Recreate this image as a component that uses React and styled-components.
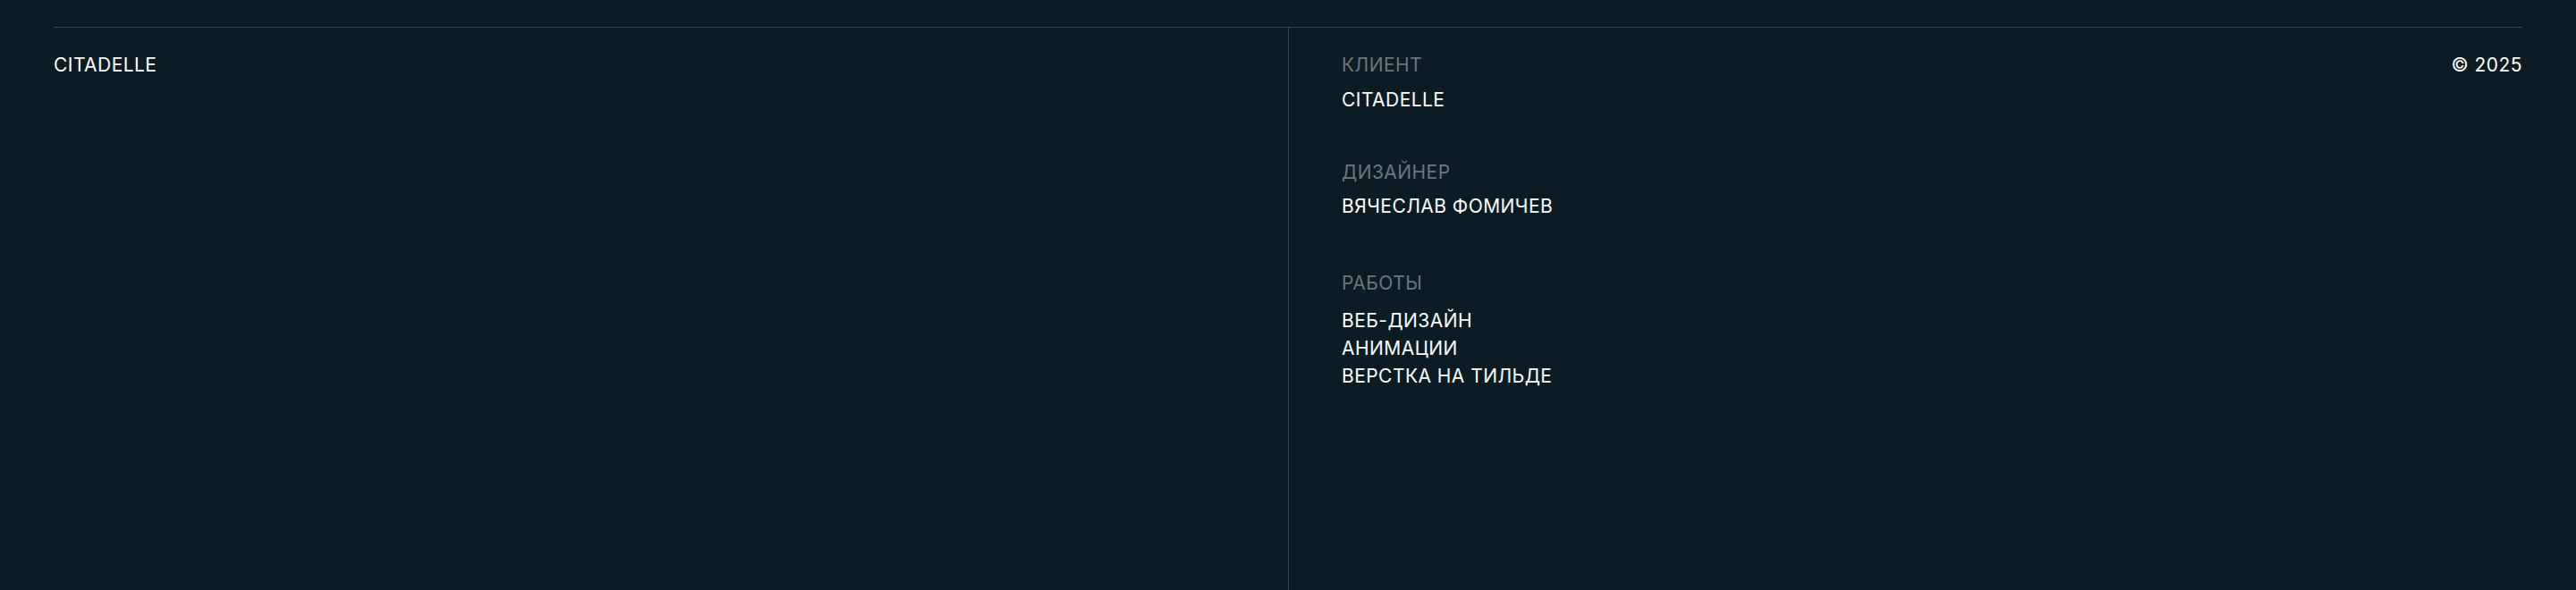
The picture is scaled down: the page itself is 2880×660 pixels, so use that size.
import styled, { createGlobalStyle } from "styled-components";

const GlobalStyle = createGlobalStyle`
  html, body {
    margin: 0;
    padding: 0;
    background-color: #0b1c25;
  }
  body {
    font-family: Inter, "Noto Sans", sans-serif;
    color: #fff;
  }
`;

const Footer = styled.footer`
  height: 660px;
  padding: 30px 60px 0;
  box-sizing: border-box;
  background-color: #0b1c25;
`;

const Grid = styled.div`
  display: grid;
  grid-template-columns: 1380px 1fr;
  height: 100%;
  border-top: 1px solid #3a464c;
`;

const Text = styled.div`
  font-size: 21px;
  line-height: 32px;
  letter-spacing: 0.45px;
  color: ${(p) => (p.$muted ? "#6c777c" : "#fff")};
`;

const Brand = styled(Text)`
  padding-top: 26px;
`;

const Side = styled.div`
  display: flex;
  justify-content: space-between;
  align-items: flex-start;
  border-left: 1px solid #3a464c;
  padding: 26px 0 0 59px;
`;

const Details = styled.div`
  display: flex;
  flex-direction: column;
  gap: 49px;
`;

const Group = styled.div`
  display: flex;
  flex-direction: column;
  gap: ${(p) => (p.$list ? "10px" : "6.5px")};
  margin-top: ${(p) => (p.$list ? "5px" : "0")};
`;

const List = styled.ul`
  list-style: none;
  margin: 0;
  padding: 0;
  li {
    font-size: 21px;
    line-height: 31px;
    letter-spacing: 0.45px;
  }
`;

export default function App() {
  return (
    <>
      <GlobalStyle />
      <Footer>
        <Grid>
          <Brand>CITADELLE</Brand>
          <Side>
            <Details>
              <Group>
                <Text $muted>КЛИЕНТ</Text>
                <Text>CITADELLE</Text>
              </Group>
              <Group>
                <Text $muted>ДИЗАЙНЕР</Text>
                <Text>ВЯЧЕСЛАВ ФОМИЧЕВ</Text>
              </Group>
              <Group $list>
                <Text $muted>РАБОТЫ</Text>
                <List>
                  <li>ВЕБ-ДИЗАЙН</li>
                  <li>АНИМАЦИИ</li>
                  <li>ВЕРСТКА НА ТИЛЬДЕ</li>
                </List>
              </Group>
            </Details>
            <Text>© 2025</Text>
          </Side>
        </Grid>
      </Footer>
    </>
  );
}
